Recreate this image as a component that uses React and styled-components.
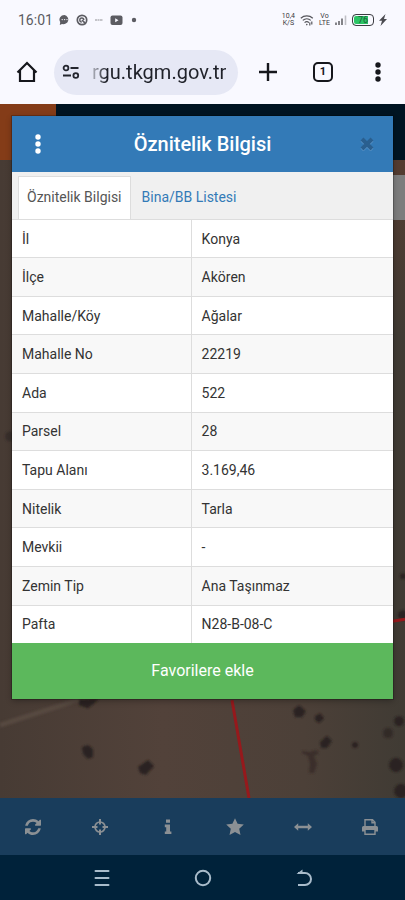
import React,{useState} from 'react'
import styled, { createGlobalStyle } from 'styled-components'

const rows = [
  ['İl','Konya'],
  ['İlçe','Akören'],
  ['Mahalle/Köy','Ağalar'],
  ['Mahalle No','22219'],
  ['Ada','522'],
  ['Parsel','28'],
  ['Tapu Alanı','3.169,46'],
  ['Nitelik','Tarla'],
  ['Mevkii','-'],
  ['Zemin Tip','Ana Taşınmaz'],
  ['Pafta','N28-B-08-C'],
];

const StatusIcons = () => (
  <>
    <svg width="11" height="12" viewBox="0 0 11 12">
      <path d="M5.500 1a5 4.600 0 1 1-2.500 9L.8 11l.4-3A5 4.600 0 0 1 5.500 1z" fill="#5c5c62"/>
      <circle cx="3.200" cy="5.600" r=".7" fill="#f8f8ff"/>
      <circle cx="5.600" cy="5.600" r=".7" fill="#f8f8ff"/>
      <circle cx="8" cy="5.600" r=".7" fill="#f8f8ff"/>
    </svg>
    <svg width="12" height="12" viewBox="0 0 12 12" fill="none" stroke="#5c5c62">
      <circle cx="6" cy="6" r="4.700" strokeWidth="1.700"/>
      <path d="M7.800 6a2 2 0 1 0-2 2" strokeWidth="1.400"/>
      <path d="M6 6l3.800 3.800" strokeWidth="1.700"/>
    </svg>
    <svg width="10" height="12" viewBox="0 0 10 12">
      <path d="M1 6h8" stroke="#b2b2b8" strokeWidth="1.500" strokeDasharray="2 .5"/>
    </svg>
    <svg width="13" height="12" viewBox="0 0 13 12">
      <rect x=".5" y="1.500" width="12" height="9.500" rx="2" fill="#5c5c62"/>
      <path d="M5.200 4.300v4l3.300-2z" fill="#f8f8ff"/>
    </svg>
    <svg width="8" height="12" viewBox="0 0 8 12">
      <circle cx="5" cy="6" r="2.200" fill="#5c5c62"/>
    </svg>
  </>
)

const WifiIcon = () => (
  <svg width="14" height="12" viewBox="0 0 14 12" fill="none" stroke="#55555b" strokeWidth="1.200">
    <path d="M.8 4.200a9 9 0 0 1 12 0M2.800 6.400a6 6 0 0 1 8 0M4.600 8.600a3.500 3.500 0 0 1 4.400 0"/>
    <circle cx="6.800" cy="10.600" r=".8" fill="#55555b" stroke="none"/>
    <path d="M9.800 8.500v3M11.800 7.500v3"/>
  </svg>
)

const SignalIcon = () => (
  <svg width="12" height="12" viewBox="0 0 12 12" strokeWidth="1.600" stroke="#66666b">
    <path d="M1 8.500v2.500M4 7v4M7 4.500v6.500"/>
    <path d="M10.500 1.500v9.500" stroke="#c0c0c6"/>
  </svg>
)

const HomeIcon = () => (
  <svg width="22" height="22" viewBox="0 0 22 22" fill="none" stroke="#16171c" strokeWidth="2.200">
    <path d="M1.500 11.500L11 2l9.500 9.500M4 9.500V20h14V9.500"/>
  </svg>
)

const TuneIcon = () => (
  <svg width="18" height="16" viewBox="0 0 18 16" fill="none" stroke="#23252e" strokeWidth="1.800">
    <circle cx="4" cy="4" r="2.400"/>
    <path d="M8.500 4h8M1 11.500h8"/>
    <circle cx="13.800" cy="11.500" r="2.400"/>
  </svg>
)

const PlusIcon = () => (
  <svg width="18" height="18" viewBox="0 0 18 18" stroke="#16171c" strokeWidth="2.400">
    <path d="M9 0v18M0 9h18"/>
  </svg>
)

const DotsIcon = ({ color }) => (
  <svg width="6" height="20" viewBox="0 0 6 20" fill={color}>
    <circle cx="3" cy="3" r="2.700"/>
    <circle cx="3" cy="10" r="2.700"/>
    <circle cx="3" cy="17" r="2.700"/>
  </svg>
)

const CloseIcon = () => (
  <svg width="14" height="14" viewBox="0 0 14 14" strokeWidth="4">
    <path d="M2 3l10 10M12 3L2 13" stroke="#5c95c8"/>
    <path d="M2 2l10 10M12 2L2 12" stroke="#2a5f8f"/>
  </svg>
)

const tools = [
  ['Yenile',
    <svg width="16" height="16" viewBox="0 0 1536 1536" fill="currentColor">
      <path d="M1511 928q0 5-1 7-64 268-268 434.500t-478 166.500q-146 0-282.500-55t-243.500-157l-129 129q-19 19-45 19t-45-19-19-45v-448q0-26 19-45t45-19h448q26 0 45 19t19 45-19 45l-137 137q71 66 161 102t187 36q134 0 250-65t186-179q11-17 53-117 8-23 30-23h192q13 0 22.500 9.500t9.500 22.500zm25-800v448q0 26-19 45t-45 19h-448q-26 0-45-19t-19-45 19-45l138-138q-148-137-349-137-134 0-250 65t-186 179q-11 17-53 117-8 23-30 23h-199q-13 0-22.500-9.500t-9.500-22.500v-7q65-268 270-434.500t480-166.500q146 0 284 55.500t245 156.500l130-129q19-19 45-19t45 19 19 45z"/>
    </svg>],
  ['Konum',
    <svg width="16" height="16" viewBox="0 0 16 16" fill="none" stroke="currentColor" strokeWidth="2">
      <circle cx="8" cy="8" r="5" strokeWidth="1.700"/>
      <path d="M8 0v5.500M8 10.500v5.500M0 8h5.500M10.500 8h5.500"/>
    </svg>],
  ['Bilgi',
    <svg width="8" height="16" viewBox="0 0 8 16" fill="currentColor">
      <path d="M2 .5h4v3.300H2zM.8 5.600H6v6.800h1.400V15H.8v-2.600h1.400V8.200H.8z"/>
    </svg>],
  ['Favoriler',
    <svg width="18" height="18" viewBox="0 0 18 18" fill="currentColor">
      <path d="M9 .2l2.600 5.600 6.200.7-4.600 4.200 1.300 6.200L9 13.900l-5.500 3 1.300-6.200L.2 6.500l6.200-.7z"/>
    </svg>],
  ['Ölçüm',
    <svg width="18" height="16" viewBox="0 0 18 16" fill="currentColor">
      <path d="M0 8l4.200-3.800v2.600h9.600V4.200L18 8l-4.200 3.800V9.200H4.200v2.600z"/>
    </svg>],
  ['Yazdır',
    <svg width="18" height="18" viewBox="0 0 18 18" fill="none" stroke="currentColor" strokeWidth="1.400">
      <path d="M4 8.500V1.700h7.500l2.500 2.500v4.300M11 1.700v3h3"/>
      <path d="M1 9.500a1.500 1.500 0 0 1 1.500-1.500h13a1.500 1.500 0 0 1 1.500 1.500V13.500h-3v-1.500H4v1.500H1z" fill="currentColor" stroke="none"/>
      <path d="M4 12v4.300h10V12"/>
    </svg>],
];

// darkened aerial view with the parcel border in red
const MapDrawing = () => (
  <MapSvg viewBox="0 0 405 639" preserveAspectRatio="none" aria-hidden="true">
    <defs>
      <linearGradient id="soil" x1="0" y1="0" x2="1" y2="0">
        <stop offset="0" stopColor="#473b34"/>
        <stop offset=".4" stopColor="#52423a"/>
        <stop offset=".75" stopColor="#4c4038"/>
        <stop offset="1" stopColor="#403b34"/>
      </linearGradient>
      <linearGradient id="edge" x1="0" y1="0" x2="0" y2="1">
        <stop offset="0" stopColor="#553c30"/>
        <stop offset="1" stopColor="#403b34"/>
      </linearGradient>
      <filter id="soft"><feGaussianBlur stdDeviation="1"/></filter>
    </defs>
    <rect width="405" height="639" fill="url(#soil)"/>
    <path d="M385 0h20v180h-20z" fill="url(#edge)"/>
    <g filter="url(#soft)">
      <path d="M0 566L65 545L160 510" stroke="#564840" strokeWidth="5" fill="none"/>
      <g fill="#2b2320">
        <path d="M79 540l20 0-11 9-9-3z"/>
        <path d="M82 588l6-2 5 4 0 8-5 2-5-5z"/>
        <path d="M138 608l10-7 6 6-8 9-6-2z"/>
        <path d="M293 551l6-5 7 6-4 6-7 0z"/>
        <path d="M315 557l5-3 4 5-5 5-4-3z"/>
        <path d="M320 583l7-6 5 5-5 7-6 0z"/>
        <path d="M302 592l8 1 6-2 3 3-5 3 3 8-3 9-5 0 1-9-2-8-6-3z" fill="#3a2f29"/>
        <circle cx="355" cy="586" r="3"/>
        <circle cx="399" cy="562" r="5"/>
        <circle cx="388" cy="574" r="5" fill="#332c27"/>
        <circle cx="396" cy="606" r="7"/>
        <circle cx="401" cy="632" r="7"/>
        <circle cx="403" cy="456" r="5"/>
        <circle cx="10" cy="277" r="5" fill="#382e29"/>
        <circle cx="403" cy="417" r="3"/>
      </g>
    </g>
    <path d="M392 462l13-2M232 541l17 98" stroke="#96191c" strokeWidth="3" fill="none"/>
  </MapSvg>
)

const App = () => {
  const [tab,setTab] = useState('info');
  const [url,setUrl] = useState('rgu.tkgm.gov.tr');

  return (
    <Screen>
      <GlobalStyle />
      <StatusBar>
        <Clock>16:01</Clock>
        <StatusIcons />
        <StatusRight>
          <TinyText>10,4<br/>K/S</TinyText>
          <WifiIcon />
          <TinyText>Vo<br/>LTE</TinyText>
          <SignalIcon />
          <Battery>76</Battery>
          <svg width="8" height="12" viewBox="0 0 8 12" fill="#4a4a50">
            <path d="M6.500 0L0 6.800h3L1.500 12 8 5H5z"/>
          </svg>
        </StatusRight>
      </StatusBar>

      <BrowserBar>
        <IconButton aria-label="Ana sayfa"><HomeIcon /></IconButton>
        <AddressBox>
          <TuneIcon />
          <AddressInput
            type="text" name="url" aria-label="Adres"
            value={url} onChange={(e)=>setUrl(e.target.value)}
          />
        </AddressBox>
        <BarActions>
          <IconButton aria-label="Yeni sekme"><PlusIcon /></IconButton>
          <IconButton aria-label="Sekmeler"><TabCount>1</TabCount></IconButton>
          <IconButton aria-label="Menü"><DotsIcon color="#16171c" /></IconButton>
        </BarActions>
      </BrowserBar>

      <Site>
        <SiteHeader><Logo /></SiteHeader>
        <MapArea>
          <MapDrawing />
          <MapControl />
        </MapArea>
        <Dialog role="dialog" aria-labelledby="dialogTitle">
          <DialogHeader>
            <IconButton aria-label="Seçenekler"><DotsIcon color="#fff" /></IconButton>
            <DialogTitle id="dialogTitle">Öznitelik Bilgisi</DialogTitle>
            <CloseButton aria-label="Kapat"><CloseIcon /></CloseButton>
          </DialogHeader>
          <Tabs>
            <Tab type="button" $active={tab === 'info'} onClick={()=>setTab('info')}>
              Öznitelik Bilgisi
            </Tab>
            <Tab type="button" $active={tab === 'list'} onClick={()=>setTab('list')}>
              Bina/BB Listesi
            </Tab>
          </Tabs>
          <InfoTable>
            <tbody>
              {rows.map(([label,value])=>(
                <tr key={label}>
                  <th scope="row">{label}</th>
                  <td>{value}</td>
                </tr>
              ))}
            </tbody>
          </InfoTable>
          <FavoriteButton type="button">Favorilere ekle</FavoriteButton>
        </Dialog>
        <Toolbar>
          {tools.map(([name,icon])=>(
            <ToolButton key={name} aria-label={name}>{icon}</ToolButton>
          ))}
        </Toolbar>
      </Site>

      <NavBar>
        <IconButton aria-label="Son uygulamalar">
          <svg width="16" height="18" viewBox="0 0 16 18" stroke="#a9bccb" strokeWidth="2" strokeLinecap="round">
            <path d="M1.500 2h13M1.500 9h13M1.500 16h13"/>
          </svg>
        </IconButton>
        <IconButton aria-label="Ana ekran">
          <svg width="18" height="18" viewBox="0 0 18 18" fill="none" stroke="#a9bccb" strokeWidth="2">
            <circle cx="9" cy="9" r="7.200"/>
          </svg>
        </IconButton>
        <IconButton aria-label="Geri">
          <svg width="16" height="18" viewBox="0 0 16 18" fill="none" stroke="#a9bccb" strokeWidth="2">
            <path d="M2 4h7a5.800 5.800 0 0 1 0 12H2"/>
            <path d="M.5 5L6.500 .5V5z" fill="#a9bccb" stroke="none"/>
          </svg>
        </IconButton>
      </NavBar>
    </Screen>
  )
}

export default App

const GlobalStyle = createGlobalStyle`
  *{
    box-sizing:border-box;
  }
  body{
    margin:0;
    font-family:Roboto, sans-serif;
    background-color:#00223a;
  }
  button, input{
    font-family:inherit;
  }
  svg{
    display:block;
    flex-shrink:0;
  }
`

const Screen = styled.div`
  min-height:100vh;
  display:flex;
  flex-direction:column;
`

const StatusBar = styled.div`
  height:40px;
  display:flex;
  align-items:center;
  gap:6px;
  padding:0 18px;
  background-color:#f9f9ff;
`

const Clock = styled.span`
  font-size:14px;
  line-height:16px;
  color:#5c5c62;
`

const StatusRight = styled.div`
  display:flex;
  align-items:center;
  gap:5px;
  margin-left:auto;
`

const TinyText = styled.span`
  font-size:7px;
  line-height:7px;
  text-align:center;
  color:#3a3a40;
`

const Battery = styled.span`
  width:22px;
  height:12px;
  border:1px solid #3c3c42;
  border-radius:4px;
  background:linear-gradient(to right, #2bc465 76%, #f9f9ff 76%);
  box-shadow:inset 0 0 0 1px #f9f9ff;
  font-size:9px;
  line-height:10px;
  text-align:center;
  color:#1d5c38;
`

const IconButton = styled.button`
  display:flex;
  align-items:center;
  justify-content:center;
  width:28px;
  height:28px;
  padding:0;
  border:none;
  background:none;
`

const CloseButton = styled(IconButton)`
  justify-self:end;
`

const BrowserBar = styled.div`
  height:64px;
  display:flex;
  align-items:center;
  padding:0 13px;
  background-color:#f9f9ff;
`

const AddressBox = styled.div`
  flex:1;
  min-width:0;
  height:45px;
  margin-left:13px;
  display:flex;
  align-items:center;
  gap:12px;
  padding:0 8px;
  border-radius:23px;
  background-color:#e6e8f5;
`

const AddressInput = styled.input`
  flex:1;
  min-width:0;
  padding:0;
  border:none;
  outline:none;
  font-size:20px;
  line-height:24px;
  color:transparent;
  background:linear-gradient(to right, #b9bbc6, #1f2129 14px);
  background-clip:text;
`

const BarActions = styled.div`
  display:flex;
  gap:27px;
  margin-left:16px;
`

const TabCount = styled.span`
  width:20px;
  height:20px;
  border:2px solid #16171c;
  border-radius:5px;
  font-size:11px;
  line-height:16px;
  font-weight:700;
  text-align:center;
  color:#16171c;
`

const Site = styled.main`
  position:relative;
  flex:1;
  display:flex;
  flex-direction:column;
`

const SiteHeader = styled.div`
  height:56px;
  background-color:#001422;
`

const Logo = styled.div`
  width:56px;
  height:100%;
  background-color:#843c18;
`

const MapArea = styled.div`
  position:relative;
  flex:1;
  min-height:580px;
  overflow:hidden;
`

const MapSvg = styled.svg`
  position:absolute;
  width:100%;
  height:100%;
`

const MapControl = styled.div`
  position:absolute;
  top:15px;
  right:0;
  width:40px;
  height:45px;
  background-color:#7d7d7d;
`

const Dialog = styled.section`
  position:absolute;
  top:12px;
  left:12px;
  right:12px;
  background-color:#fff;
  box-shadow:0 0 0 1px rgba(0,0,0,0.2), 0 2px 6px rgba(0,0,0,0.3);
`

const DialogHeader = styled.header`
  height:56px;
  display:grid;
  grid-template-columns:1fr auto 1fr;
  align-items:center;
  padding:0 12px;
  background-color:#337ab7;
`

const DialogTitle = styled.h1`
  margin:0;
  font-size:20px;
  line-height:24px;
  font-weight:500;
  color:#fff;
`

const Tabs = styled.div`
  height:48px;
  display:flex;
  padding:4px 6px 0;
  border-bottom:1px solid #ddd;
  background-color:#f0f0f0;
`

const Tab = styled.button`
  padding:0 8px 2px;
  margin-right:2px;
  border:1px solid ${({ $active }) => $active ? '#ddd' : 'transparent'};
  border-bottom:none;
  font-size:14px;
  line-height:20px;
  color:${({ $active }) => $active ? '#555' : '#337ab7'};
  background-color:${({ $active }) => $active ? '#fff' : 'transparent'};
`

const InfoTable = styled.table`
  width:100%;
  height:423px;
  border-collapse:collapse;
  font-size:14px;
  line-height:20px;
  color:#333;
  th, td{
    padding:0 10px;
    font-weight:400;
    text-align:left;
    border-bottom:1px solid #ddd;
  }
  th{
    width:47%;
    border-right:1px solid #ddd;
  }
  tr:nth-child(even){
    background-color:#f8f8f8;
  }
  tr:last-child th, tr:last-child td{
    border-bottom:none;
  }
`

const FavoriteButton = styled.button`
  display:block;
  width:100%;
  height:56px;
  padding:0;
  border:none;
  font-size:16px;
  line-height:24px;
  color:#fff;
  background-color:#5cb85c;
`

const Toolbar = styled.div`
  height:57px;
  display:grid;
  grid-template-columns:repeat(6, 1fr);
  background-color:#193d5c;
`

const ToolButton = styled.button`
  display:flex;
  align-items:center;
  justify-content:center;
  padding:0 2px 0 0;
  border:none;
  background:none;
  color:#8b9094;
`

const NavBar = styled.nav`
  height:45px;
  display:flex;
  align-items:center;
  justify-content:center;
  gap:73px;
  background-color:#00223a;
`
